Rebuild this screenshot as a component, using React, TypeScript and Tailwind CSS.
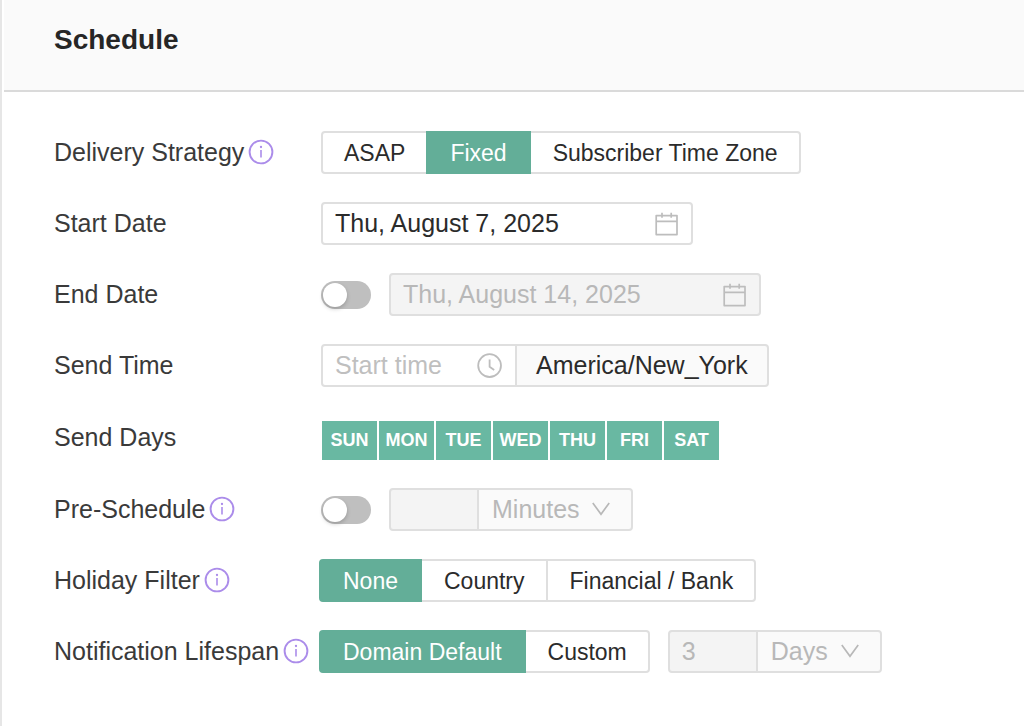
import { useState, type ReactNode } from "react";
import clsx from "clsx";

function InfoIcon() {
  return (
    <svg viewBox="0 0 26 26" className="size-[26px]" fill="none" aria-hidden="true">
      <circle cx="13" cy="13" r="11.4" stroke="#ab8cea" strokeWidth="1.9" />
      <path d="M13 11V18.6" stroke="#ab8cea" strokeWidth="1.6" />
      <circle cx="13" cy="8" r="1.15" fill="#ab8cea" />
    </svg>
  );
}

function CalendarIcon() {
  return (
    <svg viewBox="0 0 24 24" className="size-6 shrink-0" fill="none" stroke="#bdbdbd" strokeWidth="1.7" aria-hidden="true">
      <path d="M1.2 3.6H22V22.6H1.2Z" strokeLinejoin="round" />
      <path d="M1.2 9.4H22M7 0.8V5.8M16.2 0.8V5.8" />
    </svg>
  );
}

function ClockIcon() {
  return (
    <svg viewBox="0 0 26 26" className="size-[26px] shrink-0" fill="none" stroke="#bdbdbd" strokeWidth="1.8" aria-hidden="true">
      <circle cx="12.6" cy="12.6" r="11.4" />
      <path d="M12.6 6.4V13.8L17.2 17" />
    </svg>
  );
}

function ChevronIcon() {
  return (
    <svg viewBox="0 0 20 14" className="pointer-events-none absolute top-[14px] right-[22px] h-[14px] w-5" fill="none" stroke="#b8b8b8" strokeWidth="1.7" aria-hidden="true">
      <path d="M1.8 1L10 12.2L18.2 1" />
    </svg>
  );
}

type RowProps = { label: string; htmlFor?: string; info?: boolean; children: ReactNode };

function Row({ label, htmlFor, info, children }: RowProps) {
  return (
    <div className="flex items-center">
      <div className="flex w-[267px] shrink-0 items-center gap-1 whitespace-nowrap pb-[2px] text-[25px] leading-[30px] text-[#3a3a3a]">
        {htmlFor ? <label htmlFor={htmlFor}>{label}</label> : <span>{label}</span>}
        {info && (
          <button type="button" aria-label={`About ${label}`}>
            <InfoIcon />
          </button>
        )}
      </div>
      <div className="flex items-center gap-[18px]">{children}</div>
    </div>
  );
}

function Segmented({ label, options, initial }: { label: string; options: string[]; initial: string }) {
  const [value, setValue] = useState(initial);
  return (
    <div role="group" aria-label={label} className="flex">
      {options.map((option, index) => (
        <button
          key={option}
          type="button"
          aria-pressed={option === value}
          onClick={() => setValue(option)}
          className={clsx(
            "h-[43px] whitespace-nowrap border-2 text-[23px] leading-[28px] last:rounded-r-[4px] first:rounded-l-[4px]",
            option === value
              ? "z-10 -ml-[2px] border-[#63ae98] bg-[#63ae98] px-[22px] text-white"
              : "border-[#dfdfdf] bg-white pr-[21px] pl-[22px] text-[#2b2b2b] first:pl-[21px]",
            option !== value && index > 0 && "-ml-[2px]",
          )}
        >
          {option}
        </button>
      ))}
    </div>
  );
}

function DateField({ id, value, disabled }: { id: string; value: string; disabled?: boolean }) {
  return (
    <div
      className={clsx(
        "flex h-[43px] w-[372px] items-center rounded-[4px] border-2 border-[#dfdfdf] pr-3 pl-3",
        disabled ? "bg-[#f4f4f4]" : "bg-white",
      )}
    >
      <input
        id={id}
        type="text"
        defaultValue={value}
        disabled={disabled}
        className="min-w-0 flex-1 bg-transparent pb-[2px] text-[25px] leading-[30px] text-[#2b2b2b] outline-none disabled:text-[#b8b8b8]"
      />
      <CalendarIcon />
    </div>
  );
}

function Switch({ id, label }: { id: string; label?: string }) {
  return (
    <input
      id={id}
      type="checkbox"
      role="switch"
      aria-label={label}
      className="flex h-7 w-[50px] shrink-0 appearance-none items-center rounded-full bg-[#bfbfbf] px-[2px] before:size-6 before:rounded-full before:bg-white before:shadow-[0_2px_4px_rgba(0,0,0,0.2)] checked:justify-end checked:bg-[#63ae98]"
    />
  );
}

function Duration({ label, value, unit, wide }: { label: string; value: string; unit: string; wide?: boolean }) {
  return (
    <div className="flex">
      <input
        type="text"
        aria-label={`${label} amount`}
        defaultValue={value}
        disabled
        className="h-[43px] w-[90px] rounded-l-[4px] border-2 border-[#dfdfdf] bg-[#f4f4f4] px-3 text-[25px] text-[#b8b8b8]"
      />
      <div className={clsx("relative -ml-[2px]", wide ? "w-[156px]" : "w-[126px]")}>
        <select
          aria-label={`${label} unit`}
          disabled
          className="h-[43px] w-full appearance-none rounded-r-[4px] border-2 border-[#dfdfdf] bg-[#fafafa] pl-[13px] text-[25px] text-[#b8b8b8] opacity-100"
        >
          <option>{unit}</option>
        </select>
        <ChevronIcon />
      </div>
    </div>
  );
}

function DayPicker() {
  const [off, setOff] = useState<string[]>([]);
  return (
    <div role="group" aria-label="Send Days" className="flex gap-[2px] pt-[6px] pl-px">
      {["SUN", "MON", "TUE", "WED", "THU", "FRI", "SAT"].map((day) => (
        <button
          key={day}
          type="button"
          aria-pressed={!off.includes(day)}
          onClick={() => setOff(off.includes(day) ? off.filter((d) => d !== day) : [...off, day])}
          className={clsx(
            "h-[39px] w-[55px] pb-[2px] text-[18px] leading-[24px] font-bold",
            off.includes(day) ? "bg-[#eeeeee] text-[#8c8c8c]" : "bg-[#69b8a2] text-white",
          )}
        >
          {day}
        </button>
      ))}
    </div>
  );
}

export default function App() {
  return (
    <main className="min-h-screen border-l-2 border-[#e6e6e6] bg-white pl-[2px] font-['Liberation_Sans',Arial,sans-serif]">
      <header className="border-b-2 border-[#dadada] bg-[#fafafa] px-[50px] pt-6 pb-[34px]">
        <h1 className="text-[28px] leading-[32px] font-bold text-[#262626]">Schedule</h1>
      </header>
      <form className="flex flex-col gap-7 pt-[39px] pb-10 pl-[50px]">
        <Row label="Delivery Strategy" info>
          <Segmented label="Delivery Strategy" options={["ASAP", "Fixed", "Subscriber Time Zone"]} initial="Fixed" />
        </Row>
        <Row label="Start Date" htmlFor="start-date">
          <DateField id="start-date" value="Thu, August 7, 2025" />
        </Row>
        <Row label="End Date" htmlFor="end-date">
          <Switch id="end-date-enabled" label="Use end date" />
          <DateField id="end-date" value="Thu, August 14, 2025" disabled />
        </Row>
        <Row label="Send Time" htmlFor="send-time">
          <div className="flex">
            <div className="flex h-[43px] w-[196px] items-center rounded-l-[4px] border-2 border-[#dfdfdf] bg-white pr-3 pl-3">
              <input
                id="send-time"
                type="text"
                placeholder="Start time"
                className="min-w-0 flex-1 bg-transparent pb-[2px] text-[25px] leading-[30px] text-[#2b2b2b] outline-none placeholder:text-[#bfbfbf]"
              />
              <ClockIcon />
            </div>
            <button
              type="button"
              className="-ml-[2px] h-[43px] rounded-r-[4px] border-2 border-[#dfdfdf] bg-[#fafafa] px-[19px] pb-[2px] text-[25px] leading-[30px] text-[#2b2b2b]"
            >
              America/New_York
            </button>
          </div>
        </Row>
        <Row label="Send Days">
          <DayPicker />
        </Row>
        <Row label="Pre-Schedule" htmlFor="pre-schedule" info>
          <Switch id="pre-schedule" />
          <Duration label="Pre-Schedule" value="" unit="Minutes" wide />
        </Row>
        <Row label="Holiday Filter" info>
          <Segmented label="Holiday Filter" options={["None", "Country", "Financial / Bank"]} initial="None" />
        </Row>
        <Row label="Notification Lifespan" info>
          <Segmented label="Notification Lifespan" options={["Domain Default", "Custom"]} initial="Domain Default" />
          <Duration label="Notification Lifespan" value="3" unit="Days" />
        </Row>
      </form>
    </main>
  );
}
